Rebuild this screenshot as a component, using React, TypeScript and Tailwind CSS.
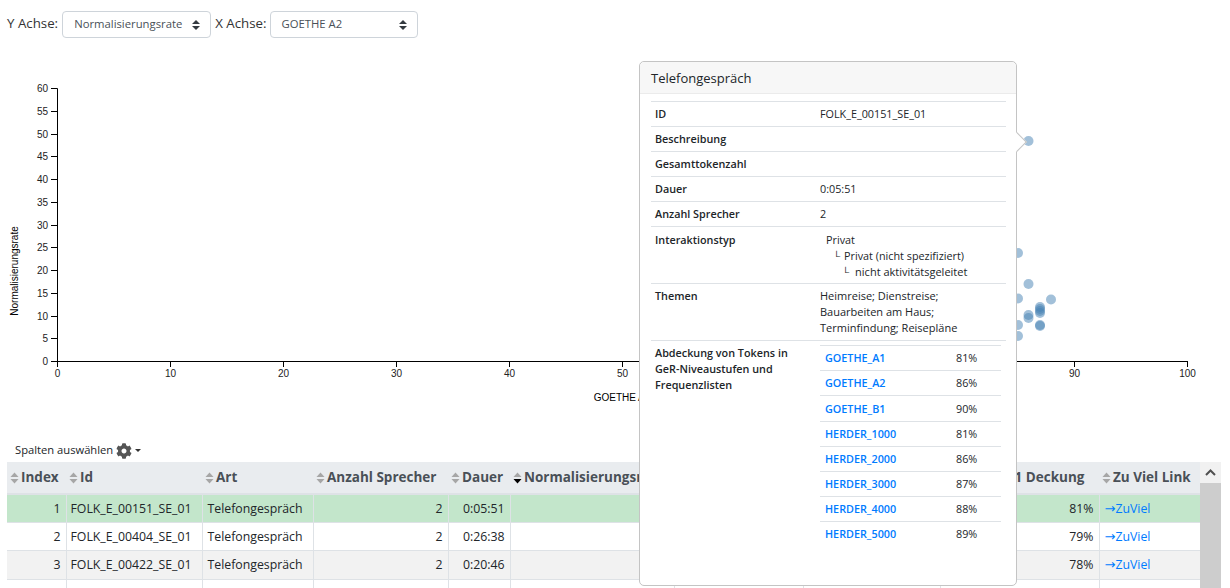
import { FaCog } from "react-icons/fa";

const FONT = "font-['Open_Sans','Noto_Sans',sans-serif]";

const yTicks = [0, 5, 10, 15, 20, 25, 30, 35, 40, 45, 50, 55, 60];
const xTicks = [0, 10, 20, 30, 40, 50, 60, 70, 80, 90, 100];

const points: [number, number][] = [
  [1028.5, 141], [1018, 253], [1028.5, 284], [1018, 298.5], [1051, 299.5],
  [1040, 307], [1040, 309], [1040, 311], [1040, 313], [1028.5, 315], [1028.5, 318],
  [1018, 325], [1040, 325], [1040, 326], [1018, 336],
];

const coverage = [
  ["GOETHE_A1", "81%", "h-[25px]"],
  ["GOETHE_A2", "86%", "h-[25px]"],
  ["GOETHE_B1", "90%", "h-[26px]"],
  ["HERDER_1000", "81%", "h-[25px]"],
  ["HERDER_2000", "86%", "h-[25px]"],
  ["HERDER_3000", "87%", "h-[25px]"],
  ["HERDER_4000", "88%", "h-[25px]"],
  ["HERDER_5000", "89%", "h-[25px]"],
];

// the two empty headers sit completely behind the popover
const columns = [
  { name: "Index", w: 59 },
  { name: "Id", w: 136 },
  { name: "Art", w: 111 },
  { name: "Anzahl Sprecher", w: 135 },
  { name: "Dauer", w: 62 },
  { name: "Normalisierungsrate", w: 164, sorted: true },
  { name: "", w: 129 },
  { name: "", w: 137 },
  { name: "GOETHE A1 Deckung", w: 159, tight: true },
  { name: "Zu Viel Link", w: 101 },
];

const rows = [
  { i: 1, id: "FOLK_E_00151_SE_01", d: "0:05:51", p: "81%", bg: "h-[28px] bg-[#c3e6cb]" },
  { i: 2, id: "FOLK_E_00404_SE_01", d: "0:26:38", p: "79%", bg: "h-[28px] bg-white" },
  { i: 3, id: "FOLK_E_00422_SE_01", d: "0:20:46", p: "78%", bg: "h-[29px] bg-[#f2f2f2]" },
];

function Arrows() {
  return (
    <svg width="8" height="10" viewBox="0 0 4 5" className="shrink-0">
      <path d="M2 0L0 2h4zm0 5L0 3h4z" fill="#343a40" />
    </svg>
  );
}

function SortIcon({ sorted }: { sorted?: boolean }) {
  return (
    <svg width="9" height="12" viewBox="0 0 9 12" className="mr-[2px] shrink-0">
      <path d="M4.5 0.5L8.5 5H0.5z" fill="#a6a6a6" />
      <path d="M4.5 11.5L8.5 7H0.5z" fill={sorted ? "#000000" : "#a6a6a6"} />
    </svg>
  );
}

function Chart() {
  return (
    <svg width="1230" height="383" className="block text-[10px]" fontFamily="'Liberation Sans', sans-serif">
      <g transform="translate(0,-48)">
        <path d="M51.5 88.5H57.5V361.5" fill="none" stroke="#000" />
        <path d="M57 361.5H1187.5V367" fill="none" stroke="#000" />
        {yTicks.map((t) => {
          const y = Math.round(361 - t * 4.55) + 0.5;
          return (
            <g key={t}>
              <line x1="51" x2="57" y1={y} y2={y} stroke="#000" />
              <text x="48" y={y + 3.5} textAnchor="end" fill="#222">{t}</text>
            </g>
          );
        })}
        {xTicks.map((t) => {
          const x = 57.5 + t * 11.3;
          return (
            <g key={t}>
              <line x1={x} x2={x} y1="361" y2="367" stroke="#000" />
              <text x={x} y="377" textAnchor="middle" fill="#222">{t}</text>
            </g>
          );
        })}
        <text x="622" y="401" textAnchor="middle" fill="#000">GOETHE A2</text>
        <text transform="translate(18,271) rotate(-90)" textAnchor="middle" fill="#000">Normalisierungsrate</text>
        {points.map(([x, y], i) => (
          <circle key={i} cx={x} cy={y} r="5" fill="#4682b4" fillOpacity="0.5" />
        ))}
      </g>
    </svg>
  );
}

function Select({ label, width }: { label: string; width: string }) {
  return (
    <div className={`flex h-[27px] items-center justify-between rounded-[4px] border border-[#ced4da] bg-white pl-[11px] pr-[10px] text-[11.3px] text-[#495057] ${width}`}>
      <span>{label}</span>
      <Arrows />
    </div>
  );
}

function Popover() {
  const label = "px-1 align-top font-semibold";
  return (
    <div className="absolute left-[639px] top-[61px] z-10 h-[525px] w-[378px] rounded-[5px] border border-[#c4c4c4] bg-white text-[10.8px] leading-[16px] text-[#212529]">
      <div className="absolute right-[-8px] top-[73px] h-[14px] w-[14px] rotate-45 border-r border-t border-[#c4c4c4] bg-white" />
      <div className="relative h-[32px] rounded-t-[5px] border-b border-[#ebebeb] bg-[#f7f7f7] px-[11px] text-[13px] leading-[32px]">
        Telefongespräch
      </div>
      <div className="relative px-[11px] pt-[7px]">
        <table className="w-[355px] table-fixed border-collapse">
          <colgroup>
            <col className="w-[165px]" />
            <col />
          </colgroup>
          <tbody>
            {[
              ["ID", "FOLK_E_00151_SE_01"],
              ["Beschreibung", ""],
              ["Gesamttokenzahl", ""],
              ["Dauer", "0:05:51"],
              ["Anzahl Sprecher", "2"],
            ].map(([k, v]) => (
              <tr key={k} className="h-[25px] border-t border-[#dee2e6]">
                <td className="px-1 font-semibold">{k}</td>
                <td className="px-1">{v}</td>
              </tr>
            ))}
            <tr className="border-t border-[#dee2e6]">
              <td className={`${label} pt-[5px]`}>Interaktionstyp</td>
              <td className="px-1 pb-[3px] pt-[5px]">
                <div className="pl-[6px]">Privat</div>
                <div className="pl-[13px]"><span className="mr-[4px] text-[10px]">└</span>Privat (nicht spezifiziert)</div>
                <div className="pl-[22px] text-[11px]"><span className="mr-[6px] text-[10px]">└</span>nicht aktivitätsgeleitet</div>
              </td>
            </tr>
            <tr className="border-t border-[#dee2e6]">
              <td className={`${label} pt-[4px]`}>Themen</td>
              <td className="px-1 pb-[4px] pt-[4px] text-[11px]">
                Heimreise; Dienstreise;
                <br />
                Bauarbeiten am Haus;
                <br />
                Terminfindung; Reisepläne
              </td>
            </tr>
            <tr className="border-t border-[#dee2e6]">
              <td className={`${label} py-[4px]`}>
                Abdeckung von Tokens in GeR-Niveaustufen und Frequenzlisten
              </td>
              <td className="px-1 pt-[4px] align-top">
                <table className="w-[181px] table-fixed border-collapse">
                  <colgroup>
                    <col className="w-[136px]" />
                    <col />
                  </colgroup>
                  <tbody>
                    {coverage.map(([k, v, h]) => (
                      <tr key={k} className={`${h} border-t border-[#dee2e6]`}>
                        <td className="pl-[5px] font-semibold text-[#007bff]">{k}</td>
                        <td>{v}</td>
                      </tr>
                    ))}
                  </tbody>
                </table>
              </td>
            </tr>
          </tbody>
        </table>
      </div>
    </div>
  );
}

function DataTable() {
  return (
    <div className="flex pl-[7px] pr-[8px]">
      <table className="w-[1193px] table-fixed border-collapse text-[12.3px] text-[#212529]">
        <colgroup>
          {columns.map((c, i) => (
            <col key={i} style={{ width: c.w }} />
          ))}
        </colgroup>
        <thead>
          <tr className="h-[32px] border-b-2 border-[#dee2e6] bg-[#e9ecef]">
            {columns.map((c, i) => (
              <th key={i} className="overflow-hidden whitespace-nowrap pl-[3px] text-left text-[13.5px] font-bold text-[#495057]">
                {c.name && (
                  <span className={c.tight ? "-ml-[6px] flex items-center" : "flex items-center"}>
                    <SortIcon sorted={c.sorted} />
                    {c.name}
                  </span>
                )}
              </th>
            ))}
          </tr>
        </thead>
        <tbody>
          {rows.map((r) => (
            <tr key={r.i} className={`border-b border-[#dee2e6] [&>td]:pt-[2px] ${r.bg}`}>
              <td className="border-r border-[#dee2e6] px-[5px] text-right">{r.i}</td>
              <td className="border-r border-[#dee2e6] px-[4px]">{r.id}</td>
              <td className="border-r border-[#dee2e6] pl-[5px]">Telefongespräch</td>
              <td className="border-r border-[#dee2e6] px-[5px] text-right">2</td>
              <td className="border-r border-[#dee2e6] px-[5px] text-right">{r.d}</td>
              <td className="border-r border-[#dee2e6]" />
              <td className="border-r border-[#dee2e6]" />
              <td className="border-r border-[#dee2e6]" />
              <td className="border-r border-[#dee2e6] px-[5px] text-right">{r.p}</td>
              <td className="pl-[5px] text-[#007bff]"><span className="font-['DejaVu_Sans'] text-[13px] leading-none">→</span>ZuViel</td>
            </tr>
          ))}
          <tr className="h-[28px] bg-white">
            {columns.slice(0, 9).map((c, i) => (
              <td key={i} className="border-r border-[#dee2e6]" />
            ))}
            <td />
          </tr>
        </tbody>
      </table>
      <div className="flex w-[21px] shrink-0 flex-col">
        <div className="flex h-[21px] items-center justify-center bg-[#f1f1f1]">
          <svg width="11" height="7" viewBox="0 0 11 7">
            <path d="M1 6L5.5 1.5L10 6" fill="none" stroke="#505050" strokeWidth="2" />
          </svg>
        </div>
        <div className="flex-1 bg-[#cdcdcd]" />
      </div>
    </div>
  );
}

export default function App() {
  return (
    <div className={`relative h-[588px] w-[1230px] overflow-hidden bg-white ${FONT}`}>
      <div className="flex items-center gap-1 pl-[7px] pt-[11px] text-[13.3px] text-[#333]">
        <span className="-mt-[2px]">Y Achse:</span>
        <Select label="Normalisierungsrate" width="w-[149px]" />
        <span className="-mr-[1px] -mt-[2px]">X Achse:</span>
        <Select label="GOETHE A2" width="w-[148px]" />
      </div>
      <div className="mt-[10px]">
        <Chart />
      </div>
      <div className="flex h-[31px] items-center pl-[15px] pt-[8px] text-[11.2px] text-[#212529]">
        Spalten auswählen
        <FaCog className="ml-[3px] text-[16px] text-[#555]" />
        <span className="ml-[3px] h-0 w-0 border-x-[3px] border-t-[3px] border-x-transparent border-t-[#333]" />
      </div>
      <DataTable />
      <Popover />
    </div>
  );
}
